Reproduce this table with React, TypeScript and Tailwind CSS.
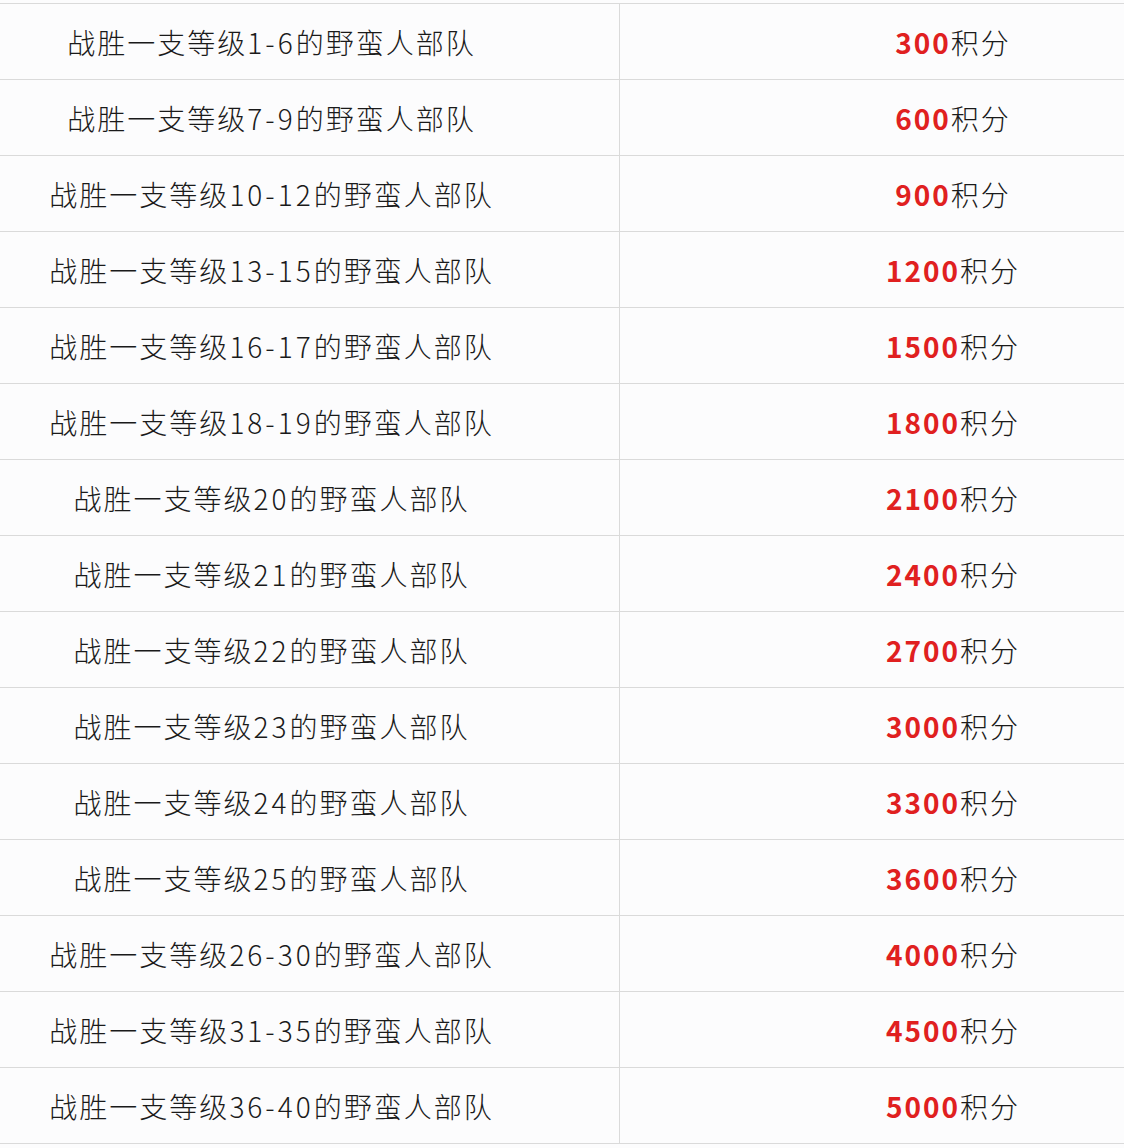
import React from "react";

const rows: [string, string][] = [
  ["1-6", "300"],
  ["7-9", "600"],
  ["10-12", "900"],
  ["13-15", "1200"],
  ["16-17", "1500"],
  ["18-19", "1800"],
  ["20", "2100"],
  ["21", "2400"],
  ["22", "2700"],
  ["23", "3000"],
  ["24", "3300"],
  ["25", "3600"],
  ["26-30", "4000"],
  ["31-35", "4500"],
  ["36-40", "5000"],
];

export default function App() {
  return (
    <div
      className="w-[1124px] h-[1148px] bg-[#fcfcfd] pt-[3px] text-[#1a1a1a]"
      style={{ fontFamily: '"Noto Sans CJK SC", "Noto Sans", sans-serif' }}
    >
      <div className="border-t border-[#dadada]">
        {rows.map(([lv, pts], i) => (
          <div key={i} className="flex h-[76px] border-b border-[#dadada]">
            <div className="w-[620px] flex items-center justify-center border-r border-[#dadada] text-[28px] tracking-[2px] pr-[76px] font-light">
              <span className="whitespace-nowrap">
                战胜一支等级<span className="tracking-[3px]">{lv}</span>的野蛮人部队
              </span>
            </div>
            <div className="flex-1 flex items-center justify-center text-[28px] tracking-[2px] pl-[162px]">
              <span className="whitespace-nowrap">
                <span className="font-bold text-[#e02020]">{pts}</span>
                <span className="font-light">积分</span>
              </span>
            </div>
          </div>
        ))}
      </div>
    </div>
  );
}
